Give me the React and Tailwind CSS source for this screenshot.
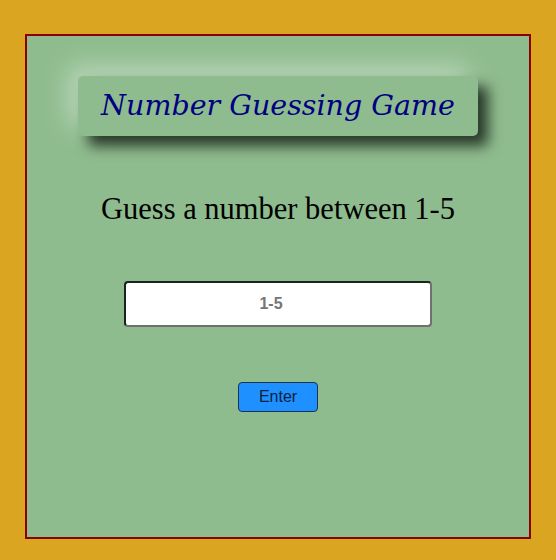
import { useState } from "react";

function App() {
  const [guess, setGuess] = useState("");

  return (
    <div className="w-[556px] h-[560px] bg-[#DAA520] pt-[34px] pl-[25px]">
      <div className="w-[506px] h-[505px] bg-[#8FBC8F] border-2 border-[#8B0000] flex flex-col items-center">
        <div className="mt-[40px] w-[400px] h-[60px] rounded-[5px] bg-[#8FBC8F] shadow-[10px_10px_14px_#283828,-10px_-10px_24px_#b8d6b8] flex items-center justify-center">
          <h1 className="font-['DejaVu_Serif',serif] italic text-[28.5px] text-[#000080]">
            Number Guessing Game
          </h1>
        </div>

        <p className="mt-[51px] font-['Liberation_Serif',serif] text-[30.5px] leading-[45px] text-black">
          Guess a number between 1-5
        </p>

        <input
          type="text"
          value={guess}
          onChange={(e) => setGuess(e.target.value)}
          placeholder="1-5"
          className="mt-[49px] w-[308px] h-[46px] pr-[14px] bg-white rounded-[4px] border-2 border-t-[#1c241c] border-l-[#1c241c] border-r-[#707070] border-b-[#707070] text-center font-['Liberation_Sans',sans-serif] text-[16px] font-bold placeholder-[#757575] focus:outline-none"
        />

        <button
          type="button"
          className="mt-[55px] w-[80px] h-[30px] bg-[#1E90FF] border border-[#1b3350] rounded-[4px] font-['Liberation_Sans',sans-serif] text-[16px] text-[#0b1f3a]"
        >
          Enter
        </button>
      </div>
    </div>
  );
}

export default App;
